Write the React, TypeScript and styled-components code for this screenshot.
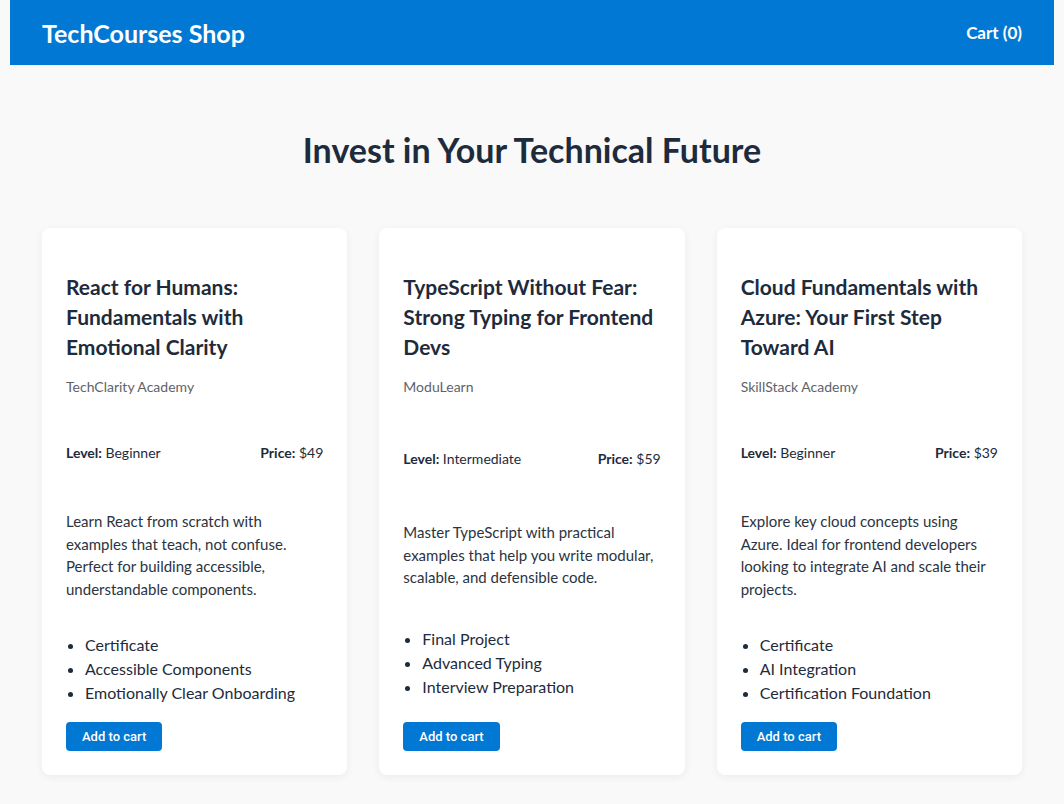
import React from "react";
import styled, { createGlobalStyle } from "styled-components";

const GlobalStyle = createGlobalStyle`
  html, body {
    margin: 0;
    padding: 0;
    background: #f9f9f9;
  }
  body {
    font-family: Lato, "Noto Sans", sans-serif;
    color: #1e2b3c;
  }
  * { box-sizing: border-box; }
`;

const Page = styled.div`
  padding: 0 10px;
  min-height: 804px;
`;

const Header = styled.header`
  height: 65px;
  background: #0078d4;
  color: #ffffff;
  display: flex;
  align-items: center;
  justify-content: space-between;
  padding: 0 32px;
`;

const Brand = styled.h1`
  margin: 0;
  font-size: 25px;
  font-weight: 700;
  line-height: 32px;
`;

const CartLink = styled.span`
  font-size: 17px;
  font-weight: 700;
`;

const Main = styled.main`
  padding: 65px 32px 28px;
`;

const Heading = styled.h2`
  margin: 0 0 58px;
  text-align: center;
  font-size: 34px;
  line-height: 40px;
  font-weight: 700;
  color: #1e2b3c;
`;

const Grid = styled.div`
  display: grid;
  grid-template-columns: repeat(3, 1fr);
  gap: 32px;
`;

const Card = styled.article`
  background: #ffffff;
  border-radius: 8px;
  box-shadow: 0 2px 8px rgba(0, 0, 0, 0.06);
  padding: 24px;
  display: flex;
  flex-direction: column;
  justify-content: space-between;
`;

const CardTop = styled.div``;

const Title = styled.h3`
  margin: 20px 0 15px;
  font-size: 21px;
  line-height: 30px;
  font-weight: 700;
  color: #1e2b3c;
`;

const Provider = styled.p`
  margin: 0;
  font-size: 14px;
  line-height: 20px;
  color: #5f6368;
`;

const Meta = styled.div`
  display: flex;
  justify-content: space-between;
  font-size: 14px;
  line-height: 20px;
  margin-top: 46px;
  color: #1e2b3c;
`;

const Label = styled.strong`
  font-weight: 700;
`;

const Description = styled.p`
  margin: 47px 0 0;
  font-size: 15px;
  line-height: 22.5px;
  color: #2b3441;
`;

const Features = styled.ul`
  margin: 33px 0 0;
  padding-left: 19px;
  font-size: 16px;
  line-height: 24px;
  color: #1e2b3c;
`;

const Button = styled.button`
  margin-top: 17px;
  align-self: flex-start;
  background: #0078d4;
  color: #ffffff;
  border: none;
  border-radius: 4px;
  padding: 7px 16px;
  font-family: Roboto, "Liberation Sans", sans-serif;
  font-size: 13px;
  font-weight: 500;
  line-height: 15px;
  cursor: pointer;
`;

type Course = {
  title: string;
  provider: string;
  level: string;
  price: string;
  description: string;
  features: string[];
};

const courses: Course[] = [
  {
    title: "React for Humans: Fundamentals with Emotional Clarity",
    provider: "TechClarity Academy",
    level: "Beginner",
    price: "$49",
    description:
      "Learn React from scratch with examples that teach, not confuse. Perfect for building accessible, understandable components.",
    features: ["Certificate", "Accessible Components", "Emotionally Clear Onboarding"],
  },
  {
    title: "TypeScript Without Fear: Strong Typing for Frontend Devs",
    provider: "ModuLearn",
    level: "Intermediate",
    price: "$59",
    description:
      "Master TypeScript with practical examples that help you write modular, scalable, and defensible code.",
    features: ["Final Project", "Advanced Typing", "Interview Preparation"],
  },
  {
    title: "Cloud Fundamentals with Azure: Your First Step Toward AI",
    provider: "SkillStack Academy",
    level: "Beginner",
    price: "$39",
    description:
      "Explore key cloud concepts using Azure. Ideal for frontend developers looking to integrate AI and scale their projects.",
    features: ["Certificate", "AI Integration", "Certification Foundation"],
  },
];

export default function App() {
  return (
    <>
      <GlobalStyle />
      <Page>
        <Header>
          <Brand>TechCourses Shop</Brand>
          <CartLink>Cart (0)</CartLink>
        </Header>
        <Main>
          <Heading>Invest in Your Technical Future</Heading>
          <Grid>
            {courses.map((c) => (
              <Card key={c.title}>
                <CardTop>
                  <Title>{c.title}</Title>
                  <Provider>{c.provider}</Provider>
                </CardTop>
                <Meta>
                  <span>
                    <Label>Level:</Label> {c.level}
                  </span>
                  <span>
                    <Label>Price:</Label> {c.price}
                  </span>
                </Meta>
                <Description>{c.description}</Description>
                <Features>
                  {c.features.map((f) => (
                    <li key={f}>{f}</li>
                  ))}
                </Features>
                <Button>Add to cart</Button>
              </Card>
            ))}
          </Grid>
        </Main>
      </Page>
    </>
  );
}
